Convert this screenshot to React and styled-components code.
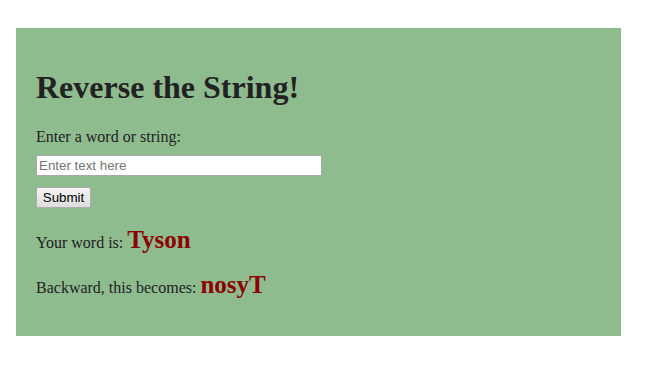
import React from "react";
import styled, { createGlobalStyle } from "styled-components";

const Global = createGlobalStyle`
  html, body { margin: 0; padding: 0; background: #fff; }
  body { font-family: "Liberation Serif", "Times New Roman", serif; color: #222; }
`;

const Page = styled.div`
  padding: 28px 0 0 16px;
`;

const Card = styled.div`
  width: 605px;
  height: 308px;
  box-sizing: border-box;
  background: #8fbc8f;
  padding: 1px 20px 0;
`;

const Title = styled.h1`
  font-size: 32px;
  font-weight: bold;
  margin: 40px 0 0;
  line-height: 37px;
`;

const Label = styled.p`
  font-size: 16px;
  margin: 22px 0 0;
  line-height: 18px;
`;

const Input = styled.input`
  display: block;
  width: 286px;
  height: 21px;
  box-sizing: border-box;
  margin: 9px 0 0;
  padding: 1px 2px;
  border: 1px solid #a9a9a9;
  font-family: "Liberation Sans", Arial, sans-serif;
  font-size: 13.33px;
  background: #fff;
  &::placeholder { color: #757575; }
`;

const Button = styled.button`
  display: block;
  margin: 11px 0 0;
  width: 55px;
  height: 21px;
  box-sizing: border-box;
  padding: 0;
  font-family: "Liberation Sans", Arial, sans-serif;
  font-size: 13.33px;
  color: #000;
  border: 1px solid #adadad;
  border-radius: 2px;
  background: linear-gradient(#f4f4f4, #dedede);
`;

const Line = styled.p`
  font-size: 16px;
  margin: ${p => p.$top}px 0 0;
  line-height: 28px;
`;

const Word = styled.span`
  font-size: 25px;
  font-weight: bold;
  color: #8b0000;
`;

export default function App() {
  return (
    <Page>
      <Global />
      <Card>
        <Title>Reverse the String!</Title>
        <Label>Enter a word or string:</Label>
        <Input placeholder="Enter text here" />
        <Button>Submit</Button>
        <Line $top={18}>Your word is: <Word>Tyson</Word></Line>
        <Line $top={14}>Backward, this becomes: <Word>nosyT</Word></Line>
      </Card>
    </Page>
  );
}
